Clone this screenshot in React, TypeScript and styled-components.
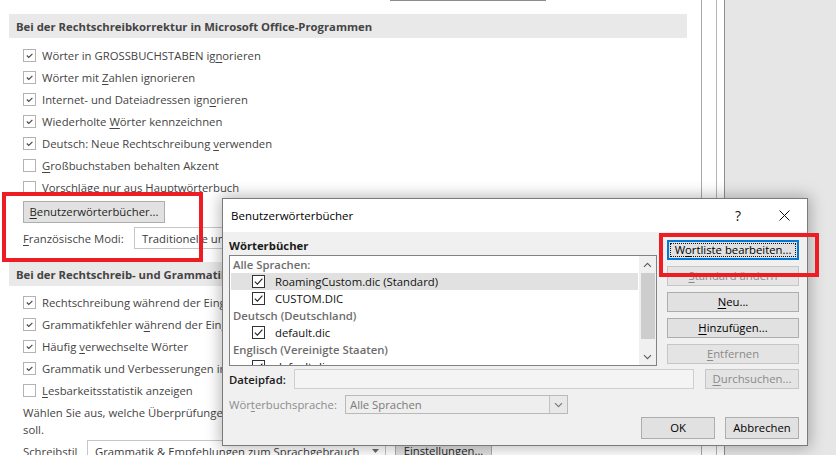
import React from 'react'
import styled, { createGlobalStyle, css } from 'styled-components'

// Daten
interface CheckOption {
  checked: boolean
  label: React.ReactNode
}

interface DictGroup {
  name: string
  items: { name: string; selected?: boolean }[]
}

const Key = styled.span`
  text-decoration: underline;
  text-underline-offset: 2px;
`

const spellingOptions: CheckOption[] = [
  { checked: true, label: <>Wörter in GROSSBUCHSTABEN ig<Key>n</Key>orieren</> },
  { checked: true, label: <>Wörter mit <Key>Z</Key>ahlen ignorieren</> },
  { checked: true, label: <>Internet- und Dateiadressen ign<Key>o</Key>rieren</> },
  { checked: true, label: <>Wiederholte <Key>W</Key>örter kennzeichnen</> },
  { checked: true, label: <>Deutsch: Neue Rechtschreibung <Key>v</Key>erwenden</> },
  { checked: false, label: <><Key>G</Key>roßbuchstaben behalten Akzent</> },
  { checked: false, label: <>Vorschläge nur aus Hauptwörterbuch</> },
]

const grammarOptions: CheckOption[] = [
  { checked: true, label: <>Rechtschreibung während der Eingabe überprüfen</> },
  { checked: true, label: <>Grammatikfehler w<Key>ä</Key>hrend der Eingabe markieren</> },
  { checked: true, label: <>Häufig <Key>v</Key>erwechselte Wörter</> },
  { checked: true, label: <>Grammatik und Verbesserungen im Bereich „Editor“ anzeigen</> },
  { checked: false, label: <><Key>L</Key>esbarkeitsstatistik anzeigen</> },
]

const dictGroups: DictGroup[] = [
  {
    name: 'Alle Sprachen:',
    items: [{ name: 'RoamingCustom.dic (Standard)', selected: true }, { name: 'CUSTOM.DIC' }],
  },
  { name: 'Deutsch (Deutschland)', items: [{ name: 'default.dic' }] },
  { name: 'Englisch (Vereinigte Staaten)', items: [{ name: 'default.dic' }] },
]

const CheckBox: React.FC<{ checked: boolean; dark?: boolean }> = ({ checked, dark }) => (
  <Box $dark={dark}>
    {checked && (
      <svg width='11' height='11' viewBox='0 0 11 11'>
        {dark ? (
          <path d='M1.8 5.6 L4.4 8.2 L9.4 2.6' fill='none' stroke='#222' strokeWidth='1.1' />
        ) : (
          <path d='M2.8 5.5 L4.8 7.5 L8.4 3.8' fill='none' stroke='#4a4a4a' strokeWidth='1.15' />
        )}
      </svg>
    )}
  </Box>
)

const Chevron: React.FC<{ down?: boolean; color?: string }> = ({ down, color = '#606060' }) => (
  <svg width='9' height='6' viewBox='0 0 9 6'>
    <path
      d={down ? 'M1 1.2 L4.5 4.7 L8 1.2' : 'M1 4.8 L4.5 1.3 L8 4.8'}
      fill='none'
      stroke={color}
      strokeWidth='1.2'
    />
  </svg>
)

const App: React.FC = () => {
  return (
    <>
      <GlobalStyle />
      <Page>
        <OptionsPane>
          <TopStub />
          <SectionHeader $top={13}>Bei der Rechtschreibkorrektur in Microsoft Office-Programmen</SectionHeader>
          <CheckList $top={6}>
            {spellingOptions.map((opt, idx) => (
              <CheckRow key={idx}>
                <CheckBox checked={opt.checked} />
                <span>{opt.label}</span>
              </CheckRow>
            ))}
          </CheckList>
          <PaneButton $w={142} $top={3}>
            <Key>B</Key>enutzerwörterbücher...
          </PaneButton>
          <FieldRow $top={4}>
            <FieldLabel $w={111}>
              <Key>F</Key>ranzösische Modi:
            </FieldLabel>
            <PaneSelect $w={280}>Traditionelle und neue Rechtschreibung</PaneSelect>
          </FieldRow>
          <SectionHeader $top={13}>Bei der Rechtschreib- und Grammatikprüfung in Word</SectionHeader>
          <CheckList $top={5}>
            {grammarOptions.map((opt, idx) => (
              <CheckRow key={idx}>
                <CheckBox checked={opt.checked} />
                <span>{opt.label}</span>
              </CheckRow>
            ))}
          </CheckList>
          <Hint>
            Wählen Sie aus, welche Überprüfungen die Grammatik- und Empfehlungsfunktion durchführen
            <br />
            soll.
          </Hint>
          <FieldRow $top={2}>
            <FieldLabel $w={64}>
              <Key>S</Key>chreibstil
            </FieldLabel>
            <PaneSelect $w={299}>
              Grammatik &amp; Empfehlungen zum Sprachgebrauch
              <SelectCaret>
                <svg width='7' height='4' viewBox='0 0 7 4'>
                  <path d='M0 0 L7 0 L3.5 4 Z' fill='#6a6a6a' />
                </svg>
              </SelectCaret>
            </PaneSelect>
            <PaneButton $w={97} $top={0} $gap={9}>
              Einstellungen...
            </PaneButton>
          </FieldRow>
        </OptionsPane>
        <Rule $tone='#a8a8a8' />
        <Gutter $w={14} />
        <Rule $tone='#b4b4b4' />
        <Gutter $w={7} />
        <Rule $tone='#8e8e8e' />
        <Outside />

        <Dialog>
          <TitleBar>
            <DialogTitle>Benutzerwörterbücher</DialogTitle>
            <TitleControl>?</TitleControl>
            <TitleControl>
              <svg width='11' height='11' viewBox='0 0 11 11'>
                <path d='M0.5 0.5 L10.5 10.5 M10.5 0.5 L0.5 10.5' stroke='#111' strokeWidth='1' />
              </svg>
            </TitleControl>
          </TitleBar>
          <DialogBody>
            <TopArea>
              <div>
                <GroupHeading>Wörterbücher</GroupHeading>
                <DictList>
                  <DictEntries>
                    {dictGroups.map((group) => (
                      <React.Fragment key={group.name}>
                        <DictGroupName>{group.name}</DictGroupName>
                        {group.items.map((item, idx) => (
                          <DictItem key={idx} $selected={item.selected}>
                            <CheckBox checked dark />
                            <span>{item.name}</span>
                          </DictItem>
                        ))}
                      </React.Fragment>
                    ))}
                  </DictEntries>
                  <ScrollTrack>
                    <ScrollArrow>
                      <Chevron />
                    </ScrollArrow>
                    <ScrollThumb />
                    <ScrollSpacer />
                    <ScrollArrow>
                      <Chevron down />
                    </ScrollArrow>
                  </ScrollTrack>
                </DictList>
              </div>
              <ButtonColumn>
                <DialogButton $focused>
                  W<Key>o</Key>rtliste bearbeiten...
                </DialogButton>
                <DialogButton $disabled>
                  <Key>S</Key>tandard ändern
                </DialogButton>
                <DialogButton>
                  <Key>N</Key>eu...
                </DialogButton>
                <DialogButton>
                  <Key>H</Key>inzufügen...
                </DialogButton>
                <DialogButton $disabled>
                  <Key>E</Key>ntfernen
                </DialogButton>
              </ButtonColumn>
            </TopArea>
            <DialogRow $top={3} $h={20}>
              <DialogLabel $w={65}>Dateipfad:</DialogLabel>
              <PathInput />
              <DialogButton $disabled $w={94} $gap={11}>
                <Key>D</Key>urchsuchen...
              </DialogButton>
            </DialogRow>
            <DialogRow $top={6} $h={19}>
              <DialogLabel $w={116} $muted>
                Wör<Key>t</Key>erbuchsprache:
              </DialogLabel>
              <LangSelect>
                <span>Alle Sprachen</span>
                <LangArrow>
                  <Chevron down color='#7a7a7a' />
                </LangArrow>
              </LangSelect>
            </DialogRow>
            <DialogRow $top={3} $h={22} $end>
              <DialogButton $w={74} $h={22}>
                OK
              </DialogButton>
              <DialogButton $w={74} $h={22} $gap={10}>
                Abbrechen
              </DialogButton>
            </DialogRow>
          </DialogBody>
        </Dialog>

        <Callout $x={2} $y={192} $w={201} $h={70} />
        <Callout $x={659} $y={233} $w={160} $h={44} />
      </Page>
    </>
  )
}

const GlobalStyle = createGlobalStyle`
  html, body {
    margin: 0;
    padding: 0;
  }
  body {
    width: 836px;
    height: 455px;
    overflow: hidden;
    background: #fff;
    font-family: 'Open Sans', 'Noto Sans', 'Liberation Sans', sans-serif;
    font-size: 11.3px;
    color: #444;
  }
  * {
    box-sizing: border-box;
  }
`

const Page = styled.div`
  position: relative;
  display: flex;
  width: 836px;
  height: 455px;
  overflow: hidden;
  background: #fff;
`

const OptionsPane = styled.div`
  width: 701px;
  flex: none;
  padding-left: 9px;
  display: flex;
  flex-direction: column;
  overflow: hidden;
`

const TopStub = styled.div`
  flex: none;
  margin-left: 381px;
  width: 156px;
  height: 1px;
  background: #8c8c8c;
`

const SectionHeader = styled.div<{ $top: number }>`
  flex: none;
  margin-top: ${(p) => p.$top}px;
  width: 678px;
  height: 24px;
  padding-left: 7px;
  display: flex;
  align-items: center;
  background: #e9e9e9;
  font-weight: 700;
  color: #444;
  white-space: nowrap;
`

const CheckList = styled.div<{ $top: number }>`
  flex: none;
  margin-top: ${(p) => p.$top}px;
  padding-left: 14px;
  display: flex;
  flex-direction: column;
`

const CheckRow = styled.div`
  height: 22px;
  display: flex;
  align-items: center;
  gap: 6px;
  white-space: nowrap;
`

const Box = styled.span<{ $dark?: boolean }>`
  flex: none;
  width: 13px;
  height: 13px;
  display: flex;
  align-items: center;
  justify-content: center;
  background: #fff;
  border: 1px solid ${(p) => (p.$dark ? '#333' : '#b3b3b3')};
`

const PaneButton = styled.button<{ $w: number; $top: number; $gap?: number }>`
  flex: none;
  margin-top: ${(p) => p.$top}px;
  margin-left: ${(p) => (p.$gap !== undefined ? p.$gap : 14)}px;
  width: ${(p) => p.$w}px;
  height: 22px;
  padding: 0 0 1px;
  font: inherit;
  color: #262626;
  background: #e1e1e1;
  border: 1px solid #adadad;
  white-space: nowrap;
`

const FieldRow = styled.div<{ $top: number }>`
  flex: none;
  margin-top: ${(p) => p.$top}px;
  padding-left: 14px;
  height: 22px;
  display: flex;
  align-items: center;
  white-space: nowrap;
`

const FieldLabel = styled.span<{ $w: number }>`
  flex: none;
  width: ${(p) => p.$w}px;
`

const PaneSelect = styled.div<{ $w: number }>`
  flex: none;
  position: relative;
  width: ${(p) => p.$w}px;
  height: 22px;
  padding-left: 7px;
  display: flex;
  align-items: center;
  background: #fff;
  border: 1px solid #c6c6c6;
  color: #3a3a3a;
  overflow: hidden;
`

const SelectCaret = styled.span`
  position: absolute;
  right: 6px;
  top: 8px;
  display: flex;
`

const Hint = styled.div`
  flex: none;
  margin-top: 3px;
  padding-left: 14px;
  line-height: 17px;
  white-space: nowrap;
`

const Rule = styled.div<{ $tone: string }>`
  flex: none;
  width: 1px;
  background: ${(p) => p.$tone};
`

const Gutter = styled.div<{ $w: number }>`
  flex: none;
  width: ${(p) => p.$w}px;
  background: #fff;
`

const Outside = styled.div`
  flex: 1;
  background: #e6e6e6;
`

const Dialog = styled.div`
  position: absolute;
  left: 222px;
  top: 198px;
  width: 586px;
  height: 248px;
  display: flex;
  flex-direction: column;
  background: #f0f0f0;
  border: 1px solid #7a7a7a;
  box-shadow: 0 0 14px 2px rgba(0, 0, 0, 0.28);
  color: #000;
  z-index: 3;
`

const TitleBar = styled.div`
  flex: none;
  height: 33px;
  display: flex;
  align-items: center;
  background: #fff;
  padding-left: 8px;
`

const DialogTitle = styled.span`
  flex: 1;
  font-size: 11.5px;
  color: #000;
`

const TitleControl = styled.span`
  flex: none;
  width: 46px;
  height: 33px;
  display: flex;
  align-items: center;
  justify-content: center;
  font-size: 14px;
  color: #111;
`

const DialogBody = styled.div`
  flex: 1;
  display: flex;
  flex-direction: column;
  padding: 0 8px 0 6px;
`

const TopArea = styled.div`
  display: grid;
  grid-template-columns: 428px 132px;
  column-gap: 10px;
`

const GroupHeading = styled.div`
  height: 23px;
  padding-top: 3px;
  display: flex;
  align-items: center;
  font-weight: 700;
  color: #1a1a1a;
`

const DictList = styled.div`
  height: 111px;
  display: flex;
  background: #fff;
  border: 1px solid #828282;
  overflow: hidden;
`

const DictEntries = styled.div`
  flex: 1;
  padding: 0 1px;
  display: flex;
  flex-direction: column;
`

const DictGroupName = styled.div`
  flex: none;
  height: 17px;
  padding-left: 2px;
  display: flex;
  align-items: center;
  font-weight: 600;
  color: #6d6d6d;
  white-space: nowrap;
`

const DictItem = styled.div<{ $selected?: boolean }>`
  flex: none;
  height: 17px;
  padding-left: 21px;
  display: flex;
  align-items: center;
  gap: 10px;
  color: #111;
  white-space: nowrap;
  background: ${(p) => (p.$selected ? '#e1e1e1' : 'transparent')};
`

const ScrollTrack = styled.div`
  flex: none;
  width: 17px;
  display: flex;
  flex-direction: column;
  align-items: center;
  background: #f0f0f0;
`

const ScrollArrow = styled.div`
  flex: none;
  width: 100%;
  height: 17px;
  display: flex;
  align-items: center;
  justify-content: center;
`

const ScrollThumb = styled.div`
  flex: none;
  width: 14px;
  height: 66px;
  background: #cdcdcd;
`

const ScrollSpacer = styled.div`
  flex: 1;
`

const ButtonColumn = styled.div`
  padding-top: 8px;
  display: flex;
  flex-direction: column;
  gap: 6px;
`

const DialogButton = styled.button<{
  $w?: number
  $h?: number
  $gap?: number
  $disabled?: boolean
  $focused?: boolean
}>`
  flex: none;
  position: relative;
  width: ${(p) => p.$w ?? 132}px;
  height: ${(p) => p.$h ?? 20}px;
  margin-left: ${(p) => p.$gap ?? 0}px;
  padding: 0 0 1px;
  font: inherit;
  color: #000;
  background: #e1e1e1;
  border: 1px solid #adadad;
  white-space: nowrap;

  ${(p) =>
    p.$disabled &&
    css`
      background: #e4e4e4;
      border-color: #c6c6c6;
      color: #8a8a8a;
    `}

  ${(p) =>
    p.$focused &&
    css`
      border: 2px solid #0078d7;
      &::after {
        content: '';
        position: absolute;
        inset: 1px;
        border: 1px dotted #111;
      }
    `}
`

const DialogRow = styled.div<{ $top: number; $h: number; $end?: boolean }>`
  flex: none;
  margin-top: ${(p) => p.$top}px;
  height: ${(p) => p.$h}px;
  display: flex;
  align-items: center;
  justify-content: ${(p) => (p.$end ? 'flex-end' : 'flex-start')};
`

const DialogLabel = styled.span<{ $w: number; $muted?: boolean }>`
  flex: none;
  width: ${(p) => p.$w}px;
  font-weight: ${(p) => (p.$muted ? 400 : 600)};
  color: ${(p) => (p.$muted ? '#8c8c8c' : '#1a1a1a')};
  white-space: nowrap;
`

const PathInput = styled.div`
  flex: none;
  width: 400px;
  height: 20px;
  background: #f4f4f4;
  border: 1px solid #cfcfcf;
`

const LangSelect = styled.div`
  flex: none;
  width: 223px;
  height: 19px;
  padding-left: 4px;
  display: flex;
  align-items: center;
  justify-content: space-between;
  background: #eeeeee;
  border: 1px solid #b9b9b9;
  color: #7a7a7a;
`

const LangArrow = styled.span`
  flex: none;
  width: 18px;
  height: 17px;
  display: flex;
  align-items: center;
  justify-content: center;
  border-left: 1px solid #c2c2c2;
  background: #e8e8e8;
`

const Callout = styled.div<{ $x: number; $y: number; $w: number; $h: number }>`
  position: absolute;
  left: ${(p) => p.$x}px;
  top: ${(p) => p.$y}px;
  width: ${(p) => p.$w}px;
  height: ${(p) => p.$h}px;
  border: 4px solid #ee1d23;
  pointer-events: none;
  z-index: 5;
`

export default App
